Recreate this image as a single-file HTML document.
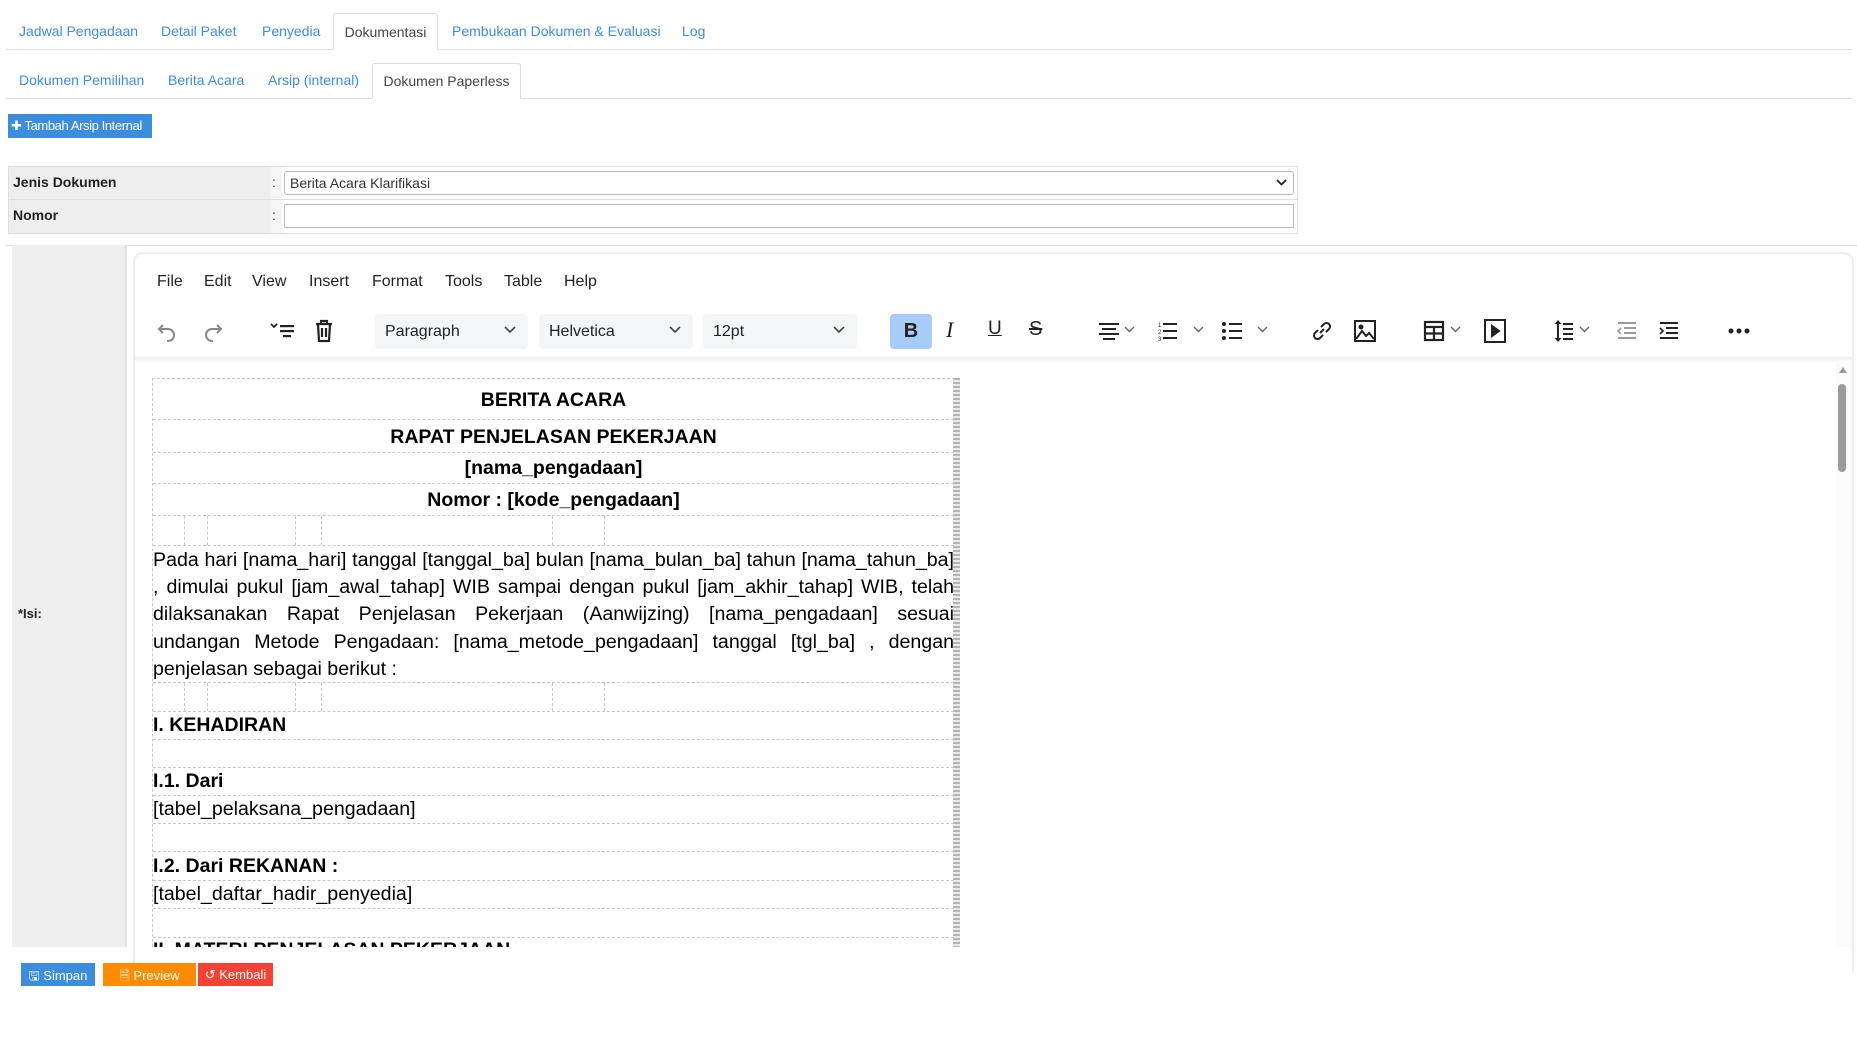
<!DOCTYPE html>
<html><head><meta charset="utf-8"><style>
*{box-sizing:border-box;margin:0;padding:0}
body{width:1857px;height:1053px;background:#fff;font-family:"Liberation Sans",Arial,sans-serif;position:relative;overflow:hidden;color:#333}
.a{position:absolute}
.tab{position:absolute;font-size:14px;color:#3c8dde;white-space:nowrap}
.act{position:absolute;border:1px solid #ddd;border-bottom:1px solid #fff;background:#fff;border-radius:3px 3px 0 0;color:#444;font-size:14px;text-align:center}
.menu{position:absolute;top:273px;font-size:16px;color:#222}
.sel{position:absolute;top:314px;height:35px;background:#f4f5f6;border-radius:4px;font-size:16px;color:#222;padding:9px 10px}
.sel svg{position:absolute;right:12px;top:12px}
.ic{position:absolute}
.row{position:absolute;left:153px;width:801px;border-bottom:1px dashed #c8c8c8;color:#000}
.ttl{font-weight:bold;font-size:19.5px;text-align:center}
.h{font-weight:bold;font-size:19.5px}
.t{font-size:19.6px}
.vl{position:absolute;top:0;bottom:0;border-left:1px dashed #c8c8c8}
.btn{position:absolute;top:963px;height:23px;color:#fff;font-size:13px;padding:4px 0;text-align:center}
</style></head><body>
<div class="a" style="left:6px;top:49px;width:1846px;border-top:1px solid #ddd"></div>
<div class="act" style="left:333px;top:13px;width:105px;height:37px;padding-top:10px">Dokumentasi</div>
<span class="tab" style="left:19px;top:23px">Jadwal Pengadaan</span>
<span class="tab" style="left:161px;top:23px">Detail Paket</span>
<span class="tab" style="left:262px;top:23px">Penyedia</span>
<span class="tab" style="left:452px;top:23px">Pembukaan Dokumen &amp; Evaluasi</span>
<span class="tab" style="left:682px;top:23px">Log</span>
<div class="a" style="left:6px;top:98px;width:1846px;border-top:1px solid #ddd"></div>
<div class="act" style="left:372px;top:63px;width:149px;height:36px;padding-top:9px">Dokumen Paperless</div>
<span class="tab" style="left:19px;top:72px">Dokumen Pemilihan</span>
<span class="tab" style="left:168px;top:72px">Berita Acara</span>
<span class="tab" style="left:268px;top:72px">Arsip (internal)</span>
<div class="a" style="left:8px;top:114px;width:144px;height:24px;background:#3c8dde;color:#fff;font-size:13px;padding:4px 3px;letter-spacing:-.4px">✚ Tambah Arsip Internal</div>
<div class="a" style="left:8px;top:166px;width:1290px;height:68px;border:1px solid #ddd;background:#fff"></div>
<div class="a" style="left:9px;top:167px;width:261px;height:66px;background:#eee"></div>
<div class="a" style="left:270px;top:167px;width:12px;height:66px;background:#f5f5f5"></div>
<div class="a" style="left:9px;top:199px;width:1288px;border-top:1px solid #ddd"></div>
<div class="a" style="left:13px;top:174px;font-size:14px;font-weight:bold;color:#222">Jenis Dokumen</div>
<div class="a" style="left:13px;top:207px;font-size:14px;font-weight:bold;color:#222">Nomor</div>
<div class="a" style="left:272px;top:174px;font-size:14px">:</div>
<div class="a" style="left:272px;top:207px;font-size:14px">:</div>
<div class="a" style="left:284px;top:171px;width:1010px;height:24px;border:1px solid #bbb;border-radius:3px;font-size:14px;padding:3px 5px;color:#333">Berita Acara Klarifikasi<svg style="position:absolute;right:6px;top:7px" width="11" height="8"><path d="M1 1l4.5 4.5L10 1" stroke="#222" stroke-width="1.8" fill="none"/></svg></div>
<div class="a" style="left:284px;top:204px;width:1010px;height:24px;border:1px solid #bbb"></div>
<div class="a" style="left:6px;top:245px;width:1851px;border-top:1px solid #ddd"></div>
<div class="a" style="left:12px;top:245px;width:115px;height:702px;background:#eee;border-right:2px solid #e2e2e2"></div>
<div class="a" style="left:18px;top:606px;font-size:13px;font-weight:bold;color:#222">*Isi:</div>
<div class="a" style="left:133px;top:252px;width:1721px;height:720px;border:2px solid #eee;border-bottom:none;border-radius:10px 10px 0 0;background:#fff"></div>
<div class="a" style="left:135px;top:357px;width:1717px;height:6px;background:linear-gradient(#eee,#fff)"></div>
<span class="menu" style="left:157px">File</span>
<span class="menu" style="left:204px">Edit</span>
<span class="menu" style="left:252px">View</span>
<span class="menu" style="left:309px">Insert</span>
<span class="menu" style="left:372px">Format</span>
<span class="menu" style="left:445px">Tools</span>
<span class="menu" style="left:504px">Table</span>
<span class="menu" style="left:564px">Help</span>
<svg class="ic" style="left:156px;top:320px" width="24" height="24" fill="none" stroke="#888" stroke-width="2"><path d="M7 5L3 9l4 4M3 9h9a6 6 0 0 1 0 12h-1"/></svg>
<svg class="ic" style="left:200px;top:320px" width="24" height="24" fill="none" stroke="#888" stroke-width="2"><path d="M17 5l4 4-4 4M21 9h-9a6 6 0 0 0 0 12h1"/></svg>
<svg class="ic" style="left:270px;top:321px" width="26" height="20" fill="#222"><path d="M1 3l3 3 3-3" stroke="#222" stroke-width="1.8" fill="none"/><rect x="10" y="4" width="14" height="2.2"/><rect x="10" y="9" width="14" height="2.2"/><rect x="13" y="14" width="8" height="2.2"/></svg>
<svg class="ic" style="left:313px;top:319px" width="22" height="24" fill="none" stroke="#222" stroke-width="2.2"><path d="M3 5h16M8 5V2h6v3M5 5l1 17h10l1-17M9 9v9M13 9v9"/></svg>
<div class="sel" style="left:375px;width:153px">Paragraph<svg width="12" height="8"><path d="M1 1l5 5 5-5" stroke="#444" stroke-width="1.6" fill="none"/></svg></div>
<div class="sel" style="left:539px;width:154px">Helvetica<svg width="12" height="8"><path d="M1 1l5 5 5-5" stroke="#444" stroke-width="1.6" fill="none"/></svg></div>
<div class="sel" style="left:703px;width:154px">12pt<svg width="12" height="8"><path d="M1 1l5 5 5-5" stroke="#444" stroke-width="1.6" fill="none"/></svg></div>
<div class="a" style="left:890px;top:314px;width:42px;height:35px;background:#a6ccf7;border-radius:4px;font-weight:bold;font-size:20px;color:#222;text-align:center;padding-top:6px">B</div>
<div class="a" style="left:946px;top:317px;font-size:22px;font-style:italic;font-family:'Liberation Serif',serif;color:#222">I</div>
<div class="a" style="left:988px;top:318px;font-size:19px;text-decoration:underline;color:#222">U</div>
<div class="a" style="left:1029px;top:318px;font-size:20px;text-decoration:line-through;color:#222">S</div>
<svg class="ic" style="left:1098px;top:321px" width="44" height="20" fill="#222"><rect x="1" y="2" width="20" height="2"/><rect x="4" y="7" width="14" height="2"/><rect x="1" y="12" width="20" height="2"/><rect x="5" y="17" width="12" height="2"/><path d="M27 6l4.5 4.5L36 6" stroke="#666" stroke-width="1.4" fill="none"/></svg>
<svg class="ic" style="left:1158px;top:320px" width="50" height="22" fill="#222"><text x="0" y="7" font-size="6">1</text><text x="0" y="14" font-size="6">2</text><text x="0" y="21" font-size="6">3</text><rect x="5" y="3" width="14" height="2"/><rect x="5" y="10" width="14" height="2"/><rect x="5" y="17" width="14" height="2"/><path d="M36 7l4.5 4.5L45 7" stroke="#666" stroke-width="1.4" fill="none"/></svg>
<svg class="ic" style="left:1222px;top:320px" width="50" height="22" fill="#222"><circle cx="2" cy="4" r="2"/><circle cx="2" cy="11" r="2"/><circle cx="2" cy="18" r="2"/><rect x="7" y="3" width="13" height="2"/><rect x="7" y="10" width="13" height="2"/><rect x="7" y="17" width="13" height="2"/><path d="M36 7l4.5 4.5L45 7" stroke="#666" stroke-width="1.4" fill="none"/></svg>
<svg class="ic" style="left:1310px;top:319px" width="24" height="24" fill="none" stroke="#222" stroke-width="2"><path d="M10 14l4-4M8 11l-3 3a3.5 3.5 0 0 0 5 5l3-3M16 13l3-3a3.5 3.5 0 0 0-5-5l-3 3"/></svg>
<svg class="ic" style="left:1353px;top:319px" width="24" height="24" fill="none" stroke="#222" stroke-width="2"><rect x="2" y="2" width="20" height="20"/><path d="M3 20l6-8 4 5 3-3 5 6" /><circle cx="8" cy="8" r="1.5" fill="#222"/></svg>
<svg class="ic" style="left:1423px;top:320px" width="48" height="22" fill="none" stroke="#222" stroke-width="2.2"><rect x="2" y="2" width="18" height="18"/><path d="M2 7h18M11 7v13M2 13.5h18"/><path d="M28 7l4.5 4.5L37 7" stroke="#666" stroke-width="1.4"/></svg>
<svg class="ic" style="left:1483px;top:319px" width="24" height="24" fill="none" stroke="#222" stroke-width="2"><rect x="2" y="1" width="20" height="22"/><path d="M9 7l7 5-7 5z" fill="#222"/></svg>
<svg class="ic" style="left:1553px;top:319px" width="46" height="24" fill="#222"><path d="M5 1l-3.5 4h7zM5 23l-3.5-4h7z"/><rect x="4" y="4" width="2" height="16"/><rect x="10" y="4" width="10" height="2"/><rect x="10" y="9" width="10" height="2"/><rect x="10" y="14" width="10" height="2"/><rect x="10" y="19" width="10" height="2"/><path d="M27 8l4.5 4.5L36 8" stroke="#666" stroke-width="1.4" fill="none"/></svg>
<svg class="ic" style="left:1615px;top:320px" width="24" height="22" fill="#999"><rect x="3" y="2" width="18" height="2"/><rect x="9" y="7" width="12" height="2"/><rect x="9" y="12" width="12" height="2"/><rect x="3" y="17" width="18" height="2"/><path d="M6 8l-3 3 3 3" stroke="#999" stroke-width="1.6" fill="none"/></svg>
<svg class="ic" style="left:1657px;top:320px" width="24" height="22" fill="#222"><rect x="3" y="2" width="18" height="2"/><rect x="9" y="7" width="12" height="2"/><rect x="9" y="12" width="12" height="2"/><rect x="3" y="17" width="18" height="2"/><path d="M3 8l3 3-3 3" stroke="#222" stroke-width="1.6" fill="none"/></svg>
<svg class="ic" style="left:1728px;top:327px" width="22" height="8" fill="#222"><circle cx="3" cy="4" r="2.5"/><circle cx="11" cy="4" r="2.5"/><circle cx="19" cy="4" r="2.5"/></svg>
<div class="a" style="left:1836px;top:362px;width:16px;height:585px;background:#fafafa"></div>
<svg class="ic" style="left:1838px;top:366px" width="10" height="8"><path d="M5 1L1 7h8z" fill="#999"/></svg>
<div class="a" style="left:1838px;top:384px;width:8px;height:88px;background:#9a9a9a;border-radius:4px"></div>
<div class="a" style="left:152px;top:378px;width:803px;height:569px;border-left:1px dashed #c8c8c8;border-top:1px dashed #c8c8c8;overflow:hidden"></div>
<div class="a" style="left:953px;top:378px;width:7px;height:569px;background:repeating-linear-gradient(#b5b5b5 0 2px,#e8e8e8 2px 4px)"></div>
<div class="row ttl" style="top:379px;height:41px;padding-top:10px">BERITA ACARA</div>
<div class="row ttl" style="top:420px;height:33px;padding-top:6px">RAPAT PENJELASAN PEKERJAAN</div>
<div class="row ttl" style="top:453px;height:31px;padding-top:4px">[nama_pengadaan]</div>
<div class="row ttl" style="top:484px;height:32px;padding-top:5px">Nomor : [kode_pengadaan]</div>
<div class="row" style="top:516px;height:30px"><i class="vl" style="left:31px"></i><i class="vl" style="left:54px"></i><i class="vl" style="left:142px"></i><i class="vl" style="left:168px"></i><i class="vl" style="left:399px"></i><i class="vl" style="left:451px"></i></div>
<div class="row t" style="top:546px;height:137px;line-height:27.2px;text-align:justify;padding-top:1px">Pada hari [nama_hari] tanggal [tanggal_ba] bulan [nama_bulan_ba] tahun [nama_tahun_ba] , dimulai pukul [jam_awal_tahap] WIB sampai dengan pukul [jam_akhir_tahap] WIB, telah dilaksanakan Rapat Penjelasan Pekerjaan (Aanwijzing) [nama_pengadaan] sesuai undangan Metode Pengadaan: [nama_metode_pengadaan] tanggal [tgl_ba] , dengan penjelasan sebagai berikut :</div>
<div class="row" style="top:683px;height:29px"><i class="vl" style="left:31px"></i><i class="vl" style="left:54px"></i><i class="vl" style="left:142px"></i><i class="vl" style="left:168px"></i><i class="vl" style="left:399px"></i><i class="vl" style="left:451px"></i></div>
<div class="row h" style="top:712px;height:28px;padding-top:2px">I. KEHADIRAN</div>
<div class="row" style="top:740px;height:28px"></div>
<div class="row h" style="top:768px;height:28px;padding-top:2px">I.1. Dari</div>
<div class="row t" style="top:796px;height:28px;padding-top:2px">[tabel_pelaksana_pengadaan]</div>
<div class="row" style="top:824px;height:28px"></div>
<div class="row h" style="top:852px;height:29px;padding-top:3px">I.2. Dari REKANAN :</div>
<div class="row t" style="top:881px;height:28px;padding-top:2px">[tabel_daftar_hadir_penyedia]</div>
<div class="row" style="top:909px;height:29px"></div>
<div class="a" style="left:153px;top:938px;height:9px;overflow:hidden;width:600px;font-weight:bold;font-size:19.5px;color:#000"><div style="margin-top:1px">II. MATERI PENJELASAN PEKERJAAN</div></div>
<div class="btn" style="left:21px;width:74px;background:#3c8dde">🖫 Simpan</div>
<div class="btn" style="left:103px;width:93px;background:#ff8c00">🗎 Preview</div>
<div class="btn" style="left:198px;width:75px;background:#f44336">↺ Kembali</div>
</body></html>
